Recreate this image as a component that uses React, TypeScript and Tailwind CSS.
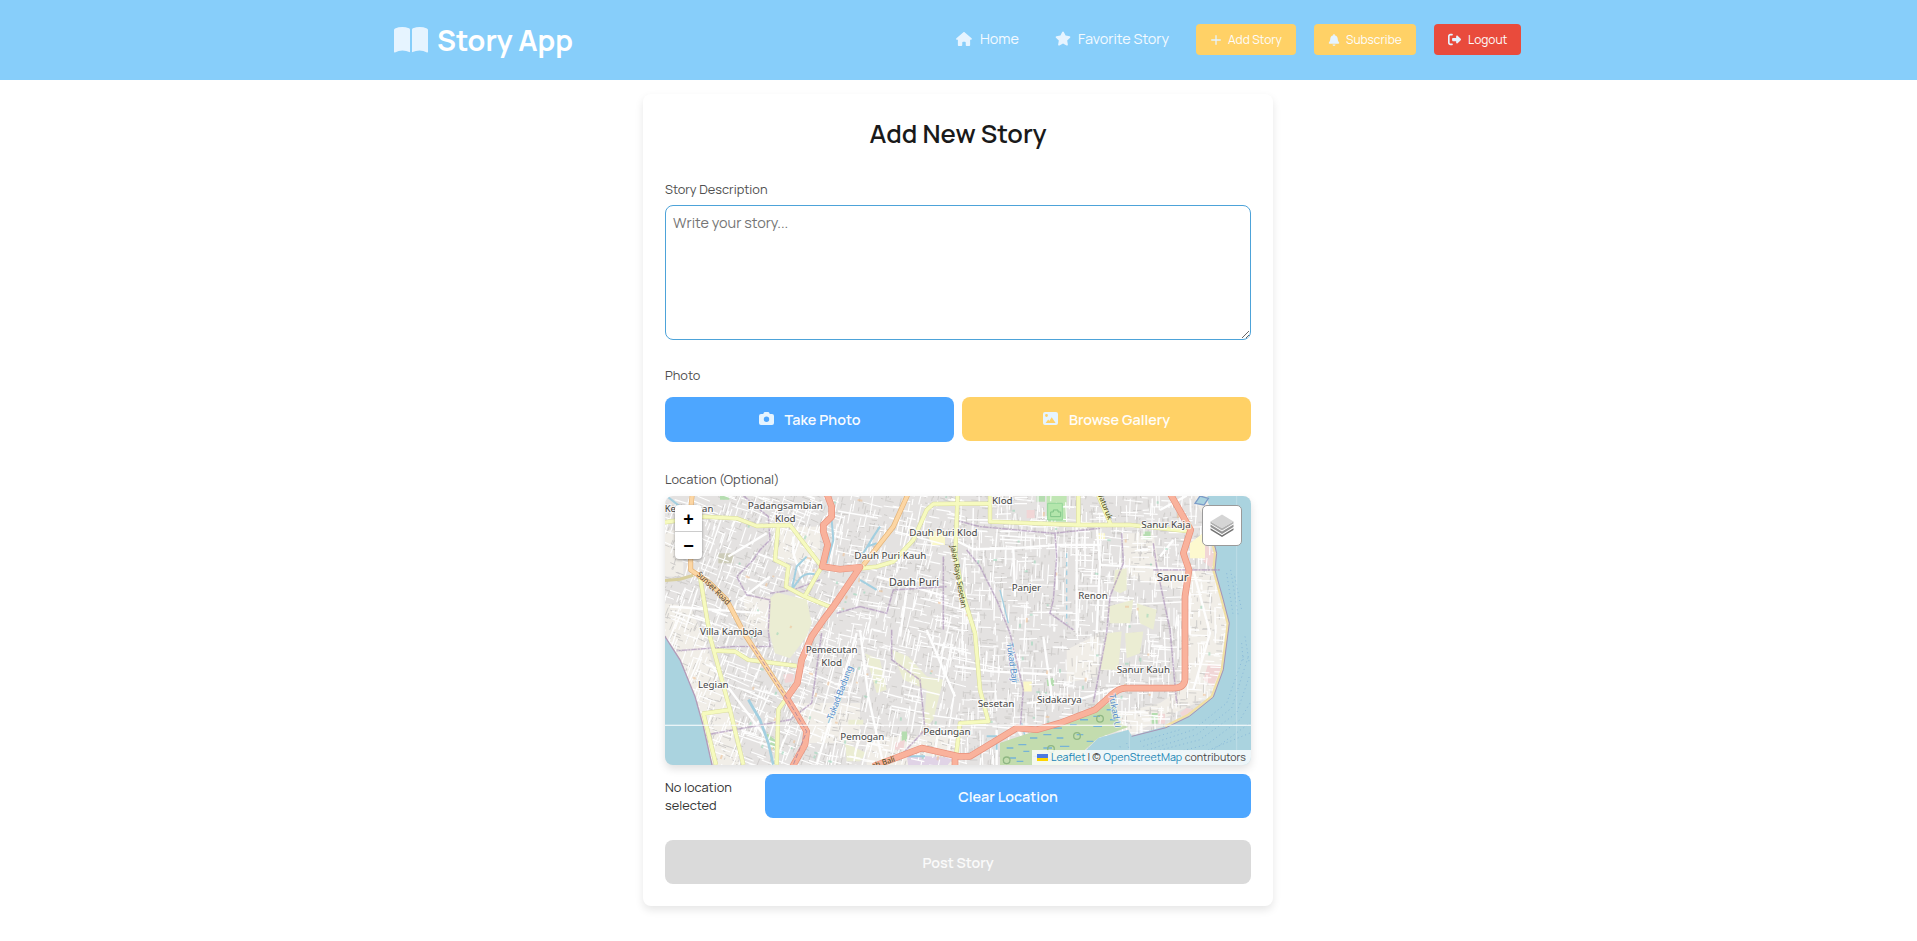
import React from "react";
import { FaHouse, FaStar, FaBell, FaRightFromBracket } from "react-icons/fa6";

/* ---------- icons ---------- */
const BookIcon = () => (
  <svg viewBox="0 0 34 26" className="h-[26px] w-[34px] shrink-0" fill="#e6f4ff">
    <path d="M0 3Q0 2 1 1.5Q8-1.2 15 1.3Q16 1.7 16 2.8V25.2Q8 21.8 1 25.4Q0 25.8 0 24.8Z" />
    <path d="M18 2.8Q18 1.7 19 1.3Q26-1.2 33 1.5Q34 2 34 3V24.8Q34 25.8 33 25.4Q26 21.8 18 25.2Z" />
  </svg>
);
const CameraIcon = () => (
  <svg viewBox="0 0 15 13" className="mb-[2px] h-[13px] w-[15px]" fill="#e6f4ff">
    <path
      fillRule="evenodd"
      d="M4.6 1.1Q5 0 6 0h3q1 0 1.4 1.1L10.7 2H13q2 0 2 2v7q0 2-2 2H2q-2 0-2-2V4q0-2 2-2h2.3ZM7.5 4.6a2.7 2.7 0 1 0 0 5.4a2.7 2.7 0 1 0 0-5.4Z"
    />
  </svg>
);
const ImageIcon = () => (
  <svg viewBox="0 0 15 13" className="mb-[2px] h-[13px] w-[15px]" fill="#e6f4ff">
    <path
      fillRule="evenodd"
      d="M2 0h11q2 0 2 2v9q0 2-2 2H2q-2 0-2-2V2q0-2 2-2ZM3.5 2.1a1.4 1.4 0 1 0 0 2.8a1.4 1.4 0 1 0 0-2.8ZM8.7 5.3L6.3 9L5.2 7.6L2.6 11h10Z"
    />
  </svg>
);
const PlusIcon = () => (
  <svg viewBox="0 0 10 10" className="h-[10px] w-[10px]" stroke="#e6f4ff" strokeWidth="1.3" strokeLinecap="round">
    <path d="M5 .7v8.6M.7 5h8.6" />
  </svg>
);
const LayersIcon = () => (
  <svg viewBox="0 0 26 26" className="mb-px h-[26px] w-[26px]">
    <path d="M1.5 16.2L13 23.3L24.5 16.2V18L13 25L1.5 18Z" fill="#747474" />
    <path d="M1.5 12.6L13 19.5L24.5 12.6V15L13 22L1.5 15Z" fill="#949494" />
    <path d="M1.5 9.5L13 16L24.5 9.5V11.5L13 18.4L1.5 11.5Z" fill="#b0b0b0" />
    <path d="M13 2.5L24.5 9.5L13 16.2L1.5 9.5Z" fill="#d5d5d5" />
  </svg>
);

/* ---------- map data ---------- */
let seed = 77;
const rnd = () => {
  seed = (seed * 16807) % 2147483647;
  return seed / 2147483647;
};
const streets = (n: number, min: number, max: number) => {
  let d = "";
  for (let i = 0; i < n; i++) {
    const x = rnd() * 1780;
    const y = rnd() * 830;
    const len = min + rnd() * (max - min);
    const tilt = x < 500 ? 0.35 : x < 900 ? 0.2 : 0.03;
    const a = tilt + (rnd() - 0.5) * 0.16 + (rnd() < 0.55 ? Math.PI / 2 : 0);
    d += `M${x.toFixed(0)} ${y.toFixed(0)}l${(Math.cos(a) * len).toFixed(0)} ${(Math.sin(a) * len).toFixed(0)}`;
  }
  return d;
};
const buildings = streets(3000, 5, 26);
const lanes = streets(2300, 14, 60);
const roadsMinor = streets(110, 60, 170);
const marks = streets(90, 5, 12);
const marks2 = streets(60, 5, 14);

const yellow =
  "M15 97L130 80L230 85L290 108L390 105L485 230L435 318M355 105L345 210L385 230L378 290L430 318L520 355M605 235L650 230L700 215L760 150L800 60L820 42L990 40M990 17V95L1255 105L1410 105L1595 125M1255 17V105M1315 17L1352 103M893 17L886 190L905 300L945 430L960 600L985 695L900 700L888 800M120 260L150 440L210 660L250 825M165 482L225 485L265 510L410 528M127 672L210 660M130 670L168 825M380 625L355 660L350 825";
const red =
  "M500 10L515 50V80L490 105V125L503 165L487 230L540 238L600 232L520 350L490 390L455 440L425 510L412 580L380 625L405 665L440 725L435 765L398 830M640 830L785 775L895 800L930 800L1070 715L1130 720L1200 700L1305 660L1350 620Q1375 594 1400 595H1540Q1572 595 1575 570V320L1587 240L1570 190L1592 120L1530 10M885 798V830";
const orange = "M97 10L92 60V240L150 280L200 330L255 435L380 625M745 10L700 110L610 225";
const white =
  "M885 150L940 178L1060 175L1190 165H1320M1060 175L1065 320M1250 110V430M1310 110L1320 220L1310 430M1190 170V300M1320 225L1480 233L1600 240L1650 430L1600 600M590 430L470 825M600 420L625 620L670 825M800 420L850 540L885 620M885 530L1000 545L1185 555M1385 590L1270 625L1100 640M1070 715L1140 830M1010 720V830M400 140V190L430 280M30 350L300 370M150 520L330 760M240 330L330 260M650 260L860 320M745 270L720 440M1150 440L1175 620M1500 60L1580 17M1500 200L1540 150M205 200L320 130";
const boundaries =
  "M250 17L325 80L330 150L300 180L280 210L230 260L260 315L330 330L325 420L330 470L220 470L50 483M330 310L400 300L480 270M485 430L455 640L390 690L140 735M600 350L680 370L700 300L860 290M600 350L530 370M695 420V510L780 570L795 720L720 800M850 200V420M885 90L960 110L1180 130L1320 115M1185 130L1190 200L1180 330L1170 370L1240 420M920 180L960 230L1010 330L1050 430L1090 600L1080 720M1385 130L1390 220L1350 320L1340 430L1300 640M1480 160L1490 230L1530 420L1550 640M1480 240H1680";
const places: [string, number, number, number][] = [
  ["Padangsambian", 376, 56, 226],
  ["Klod", 376, 95, 62],
  ["Dauh Puri Klod", 850, 139, 205],
  ["Dauh Puri Kauh", 691, 206, 216],
  ["Dauh Puri", 762, 287, 150],
  ["Villa Kamboja", 214, 436, 188],
  ["Pemecutan", 515, 489, 156],
  ["Klod", 515, 528, 62],
  ["Legian", 160, 594, 92],
  ["Pemogan", 607, 750, 132],
  ["Pedungan", 861, 735, 142],
  ["Sesetan", 1008, 653, 110],
  ["Sidakarya", 1198, 641, 134],
  ["Sanur Kauh", 1450, 551, 160],
  ["Klod", 1027, 41, 62],
  ["Sanur Kaja", 1518, 115, 148],
  ["Sanur", 1538, 273, 95],
  ["Panjer", 1099, 304, 88],
  ["Renon", 1299, 328, 88],
  ["Kerobokan", 87, 67, 146],
];

const Sea = "M15 440L60 510L105 620L130 710L157 830H10V440Z";
const SeaEast =
  "M1640 10L1665 190L1660 240L1685 330L1703 400L1700 430L1685 540L1655 620L1585 675L1515 710L1415 738L1405 720L1315 745L1275 785L1270 830H1780V10Z";

const StreetMap = () => (
  <svg viewBox="15 18 1758 808" preserveAspectRatio="none" className="block h-full w-full" fill="none">
    <rect x="0" y="0" width="1800" height="840" fill="#e4e2e1" />
    <g fill="#f1eee8">
      <path d="M15 340L90 350L130 440L200 640L240 830H150L15 470Z" />
      <path d="M1385 130H1480L1500 240H1700L1720 420L1690 600L1400 740L1300 690L1500 640L1560 600L1560 300L1400 260Z" />
      <path d="M340 110H480V220H350ZM1220 480L1320 430L1310 560L1220 580ZM400 640H600V760H440ZM15 120H70V260H15ZM250 320H330V420H260ZM620 740H900V830H620Z" />
    </g>
    <g stroke="#cfcdcb" strokeWidth="3">
      <path d={buildings} />
    </g>
    <g fill="#ebedd3">
      <path d="M695 480L745 500L800 560L850 570L820 690L790 720L800 600L730 570ZM615 490L660 510L680 600L650 610ZM555 760L620 790L600 815H560ZM565 690H610V705H565Z" />
    </g>
    <path d="M1160 17H1220V95H1160Z" fill="#c0e6b4" />
    <g fill="#b5ddb0">
      <path d="M1130 17H1155V35H1130ZM1450 125h22v24h-22ZM320 730L345 750V780L325 770ZM1160 570l22-6v25h-20ZM725 725h16v30h-16ZM1475 670h18v32h-18ZM180 17h28v12h-28Z" />
    </g>
    <g fill="#f1d6d6">
      <path d="M1632 160L1665 190L1655 235L1630 215ZM1645 520L1685 530L1660 590L1630 570ZM1560 670L1580 655L1600 660L1570 685ZM1100 60h24v25h-24ZM705 760L735 750L730 780H705ZM370 555L400 550V575L375 580ZM1495 672h20v30h-20Z" />
    </g>
    <path d="M800 125h55v40h-40ZM1310 130h25v20h-25ZM1090 575h25v30h-25Z" fill="#fbf8c9" />
    <path d="M175 190h45v30h-45ZM1640 730h8v8h-8Z" fill="#cdccb9" />
    <path d="M740 795L880 805L860 830H745Z" fill="#e0d3e6" />

    <g stroke="#fefefe">
      <path d={lanes} strokeWidth="3.4" />
      <path d={roadsMinor} strokeWidth="4.5" />
      <path d={white} strokeWidth="7" strokeLinejoin="round" />
    </g>
    <g fill="#ebedd3">
      <path d="M330 325L350 308L440 330L455 400L440 440L390 505L345 490L325 420Z" />
      <path d="M1365 240L1400 235L1400 300L1380 310L1360 300ZM1345 350L1420 330L1410 400L1350 400ZM1320 540L1340 430L1385 425L1375 540ZM1395 430L1450 425L1440 490L1400 505ZM1430 340L1490 360L1480 420L1440 400Z" />
    </g>
    <path d="M1163 40H1207V90H1163Z" fill="#b4e6ac" stroke="#93d69a" strokeWidth="3" />
    <path d="M1172 66h8v-6h14v6h8v14h-30Z" stroke="#7fc488" strokeWidth="3" />
    <path d="M1590 160L1635 125V205H1590Z" fill="#fdf9cf" />
    <path d={marks} stroke="#8fd3b4" strokeWidth="6" opacity=".5" />
    <path d={marks2} stroke="#eec39a" strokeWidth="6" opacity=".6" />

    <g stroke="#a3cfe0" strokeLinejoin="round">
      <path d="M515 90L520 150L500 220M470 255Q440 245 420 265L395 300L410 230L440 200M610 190L640 140L660 110M620 170L650 160M600 270L650 300" strokeWidth="6" />
      <path d="M265 630L300 690L325 760L340 825" strokeWidth="8" />
      <path d="M570 530L505 700M1050 460L1070 580M1360 620L1375 700M1020 300L1045 400M1085 700L1100 760" strokeWidth="4" />
      <path d="M1220 190V400" strokeWidth="4" strokeDasharray="14 12" />
      <path d="M745 800h50M980 740h30v40M20 18L60 50" strokeWidth="6" />
    </g>

    <path d="M1020 760L1130 722L1305 662L1360 634L1375 700L1405 712L1315 745L1275 780V830H1020Z" fill="#c3dcae" />
    <path
      d="M1040 775h20M1075 765h24M1110 745h22M1150 735h24M1190 745h20M1180 715h26M1230 705h20M1260 690h24M1300 680h20M1340 660h20M1150 775h26M1200 770h28M1120 800h24M1050 805h18M1090 785h18M1160 810h30M1220 795h24M1300 710h26M1250 735h20M1280 755h20M1350 690h16M1070 815h20"
      stroke="#76b3d6"
      strokeWidth="4"
    />
    <g stroke="#8fb783" strokeWidth="4">
      <circle cx="1320" cy="687" r="10" />
      <circle cx="1251" cy="739" r="10" />
      <circle cx="1173" cy="778" r="10" />
      <circle cx="1040" cy="812" r="10" />
    </g>

    <path d={Sea} fill="#aad3df" stroke="#b29ab8" strokeWidth="4" />
    <path d={SeaEast} fill="#aad3df" />
    <path d="M1655 150L1665 190L1660 240L1685 330L1703 400L1700 430L1685 540L1655 620L1585 675L1515 710" stroke="#f0dfa4" strokeWidth="7" />
    <path d="M1660 150L1670 190L1665 240L1690 330L1708 400L1704 430L1690 540L1660 622L1588 680L1518 714L1415 740" stroke="#a894b4" strokeWidth="3" />
    <path d="M1600 10H1645L1640 30L1655 60L1640 90L1620 60Z" fill="#f1eee8" />
    <path d="M1605 40L1620 18L1645 25L1632 45Z" fill="#aad3df" stroke="#7c9cc8" strokeWidth="4" />
    <g stroke="#84b5d8" strokeWidth="3" strokeDasharray="3 9" opacity=".9">
      <path d="M1700 250L1720 380M1712 240L1735 380M1724 260L1745 360M1450 770L1600 720L1700 640L1750 500M1450 785L1610 735L1715 655L1765 500M1430 800L1620 750L1730 670L1768 560M1500 800L1640 765L1740 690L1770 640M1560 810L1660 780L1770 700M1440 755L1560 720M1600 800L1770 730M1755 440L1768 520M1745 460L1750 520M1400 760L1420 810M1380 770L1390 800" />
    </g>

    <path d={boundaries} stroke="#b79fc2" strokeWidth="6" opacity=".28" />
    <path d={boundaries} stroke="#aa90b8" strokeWidth="3.5" strokeDasharray="16 4 5 4" opacity=".6" />

    <g strokeLinejoin="round">
      <path d={yellow} stroke="#d9dc9b" strokeWidth="13" />
      <path d={yellow} stroke="#f6fabf" strokeWidth="10" />
      <path d="M15 272L60 268L100 256" stroke="#d8cf9e" strokeWidth="9" />
      <path d={orange} stroke="#e3b276" strokeWidth="15" />
      <path d={orange} stroke="#fcd6a4" strokeWidth="11" />
      <path d={red} stroke="#e8917c" strokeWidth="20" />
      <path d={red} stroke="#f9b29c" strokeWidth="16" />
      <path d="M275 465L380 625L440 725L400 825" stroke="#b68e9f" strokeWidth="3" strokeDasharray="14 6" />
    </g>

    <g fontFamily="'Noto Sans', sans-serif" textAnchor="middle">
      <text transform="translate(155 301) rotate(45)" textLength="130" lengthAdjust="spacingAndGlyphs" fontSize="25" fill="#5b4a33">
        Sunset Road
      </text>
      <g fontSize="23" fill="#4d4d22">
        <text transform="translate(888 262) rotate(80)" textLength="190">Jalan Raya Sesetan</text>
        <text transform="translate(1327 48) rotate(68)">Waturuk</text>
        <text transform="translate(672 826) rotate(-19)">ah Bali</text>
      </g>
      <g fontSize="27" fill="#5b8fc9" stroke="#ffffff" strokeOpacity=".6" strokeWidth="5" paintOrder="stroke">
        <text transform="translate(548 612) rotate(-69)" textLength="172">Tukad Badung</text>
        <text transform="translate(1048 520) rotate(82)" textLength="120">Tukad Baji</text>
        <text transform="translate(1356 665) rotate(80)">Tukad U</text>
      </g>
      <g fill="#454545" stroke="#ffffff" strokeOpacity=".75" strokeWidth="7" paintOrder="stroke" strokeLinejoin="round">
        {places.map(([name, x, y, w], i) => (
          <text key={i} x={x} y={y} textLength={w} lengthAdjust="spacingAndGlyphs" fontSize={name === "Sanur" || name === "Dauh Puri" ? 32 : 29}>
            {name}
          </text>
        ))}
      </g>
    </g>
    <path d="M15 706.5H1780" stroke="#ffffff" strokeWidth="3.5" />
    <path d="M1408 706V826M1730 18V826" stroke="#ffffff" strokeWidth="2" opacity=".35" />
  </svg>
);

/* ---------- page ---------- */
const navButton = "flex h-[31px] items-center rounded-[4px] text-[12px] text-[#fdfdfd] whitespace-nowrap";
const label = "text-[12.8px] leading-[20px] text-[#4f4f4f]";
const action = "flex items-center justify-center rounded-[8px] text-[14.4px] font-semibold";

export default function App() {
  return (
    <div className="h-[941px] w-full overflow-hidden bg-white font-['Manrope','Inter',sans-serif]">
      <header className="flex h-[80px] justify-center bg-[#87cefa] pr-[2px]">
        <div className="flex w-[1127px] items-center justify-between pb-px">
          <a className="flex items-center">
            <BookIcon />
            <span className="ml-[9px] text-[28.8px] leading-[40px] font-bold text-white">Story App</span>
          </a>
          <nav className="flex items-center text-[14.4px] text-[#f4faff]">
            <a className="flex w-[99px] items-center pb-px whitespace-nowrap">
              <FaHouse className="mr-[8px] h-[14px] w-[16px] text-[#e6f4ff]" />
              Home
            </a>
            <a className="flex w-[141px] items-center pb-px whitespace-nowrap">
              <FaStar className="mr-[7px] h-[15px] w-[16px] text-[#e6f4ff]" />
              Favorite Story
            </a>
            <button className={`${navButton} w-[100px] bg-[#ffd166] pl-[15px]`}>
              <PlusIcon />
              <span className="ml-[7px]">Add Story</span>
            </button>
            <button className={`${navButton} ml-[18px] w-[102px] bg-[#ffd166] pl-[14px]`}>
              <FaBell className="h-[12px] w-[12px] text-[#e6f4ff]" />
              <span className="ml-[6px]">Subscribe</span>
            </button>
            <button className={`${navButton} ml-[18px] w-[87px] bg-[#e94b3c] pl-[14px]`}>
              <FaRightFromBracket className="h-[13px] w-[13px] text-[#e6f4ff]" />
              <span className="ml-[7px]">Logout</span>
            </button>
          </nav>
        </div>
      </header>

      <div className="flex justify-center pt-[14px] pr-px">
        <main className="flex h-[812px] w-[630px] flex-col rounded-[8px] bg-white px-[22px] shadow-[0_4px_8px_rgba(0,0,0,0.1)]">
          <h1 className="mt-[22px] text-center text-[25.6px] leading-[36px] font-semibold text-[#1a1a1a]">Add New Story</h1>
          <label className={`${label} mt-[27px]`}>Story Description</label>
          <textarea
            className="mt-[6px] block h-[135px] w-full shrink-0 resize rounded-[8px] border border-[#4da3d9] px-[7px] py-[6px] text-[14.4px] leading-[22px] placeholder:text-[#757575]"
            placeholder="Write your story..."
          />
          <label className={`${label} mt-[25px]`}>Photo</label>
          <div className="mt-[12px] flex items-start gap-[8px]">
            <button className={`${action} h-[45px] flex-1 bg-[#4da6ff] text-[#f7fbff]`}>
              <CameraIcon />
              <span className="ml-[11px]">Take Photo</span>
            </button>
            <button className={`${action} h-[44px] flex-1 bg-[#ffd166] pt-px text-[#fffdf8]`}>
              <ImageIcon />
              <span className="ml-[11px]">Browse Gallery</span>
            </button>
          </div>
          <label className={`${label} mt-[27px]`}>Location (Optional)</label>
          <div className="relative mt-[7px] h-[269px] shrink-0 overflow-hidden rounded-[8px] shadow-[0_4px_8px_rgba(0,0,0,0.12)]">
            <StreetMap />
            <div className="absolute top-[9px] left-[10px] w-[27px] overflow-hidden rounded-[4px] bg-white text-center font-['Liberation_Sans'] text-[18px] font-bold text-black shadow-[0_1px_3px_rgba(0,0,0,0.4)]">
              <div className="h-[27px] border-b border-[#ccc] leading-[28px]">+</div>
              <div className="h-[27px] leading-[28px]">−</div>
            </div>
            <div className="absolute top-[9px] right-[9px] flex h-[41px] w-[40px] items-center justify-center rounded-[5px] border border-[#9a9a9a] bg-white">
              <LayersIcon />
            </div>
            <div className="absolute right-0 bottom-0 flex h-[15px] w-[219px] items-center bg-white/80 pl-[5px] text-[10.65px] whitespace-nowrap text-[#444]">
              <span className="mr-[3px] h-[7px] w-[11px] border-b-[3px] border-[#ffd500] bg-[#4c7be1]" />
              <span className="text-[#1b86b5]">Leaflet</span>
              <span className="mx-[2px]">|</span>©<span className="mx-[2.5px] text-[#1b86b5]">OpenStreetMap</span>contributors
            </div>
          </div>
          <div className="mt-[9px] flex h-[44px] items-center">
            <p className="w-[100px] pr-[20px] text-[12.8px] leading-[18px] text-[#333]">No location selected</p>
            <button className={`${action} h-[44px] flex-1 bg-[#4da6ff] pt-px text-[#f7fbff]`}>Clear Location</button>
          </div>
          <button className={`${action} mt-[22px] h-[44px] w-full bg-[#dadada] pt-px text-[#fafafa]`}>Post Story</button>
        </main>
      </div>
    </div>
  );
}
